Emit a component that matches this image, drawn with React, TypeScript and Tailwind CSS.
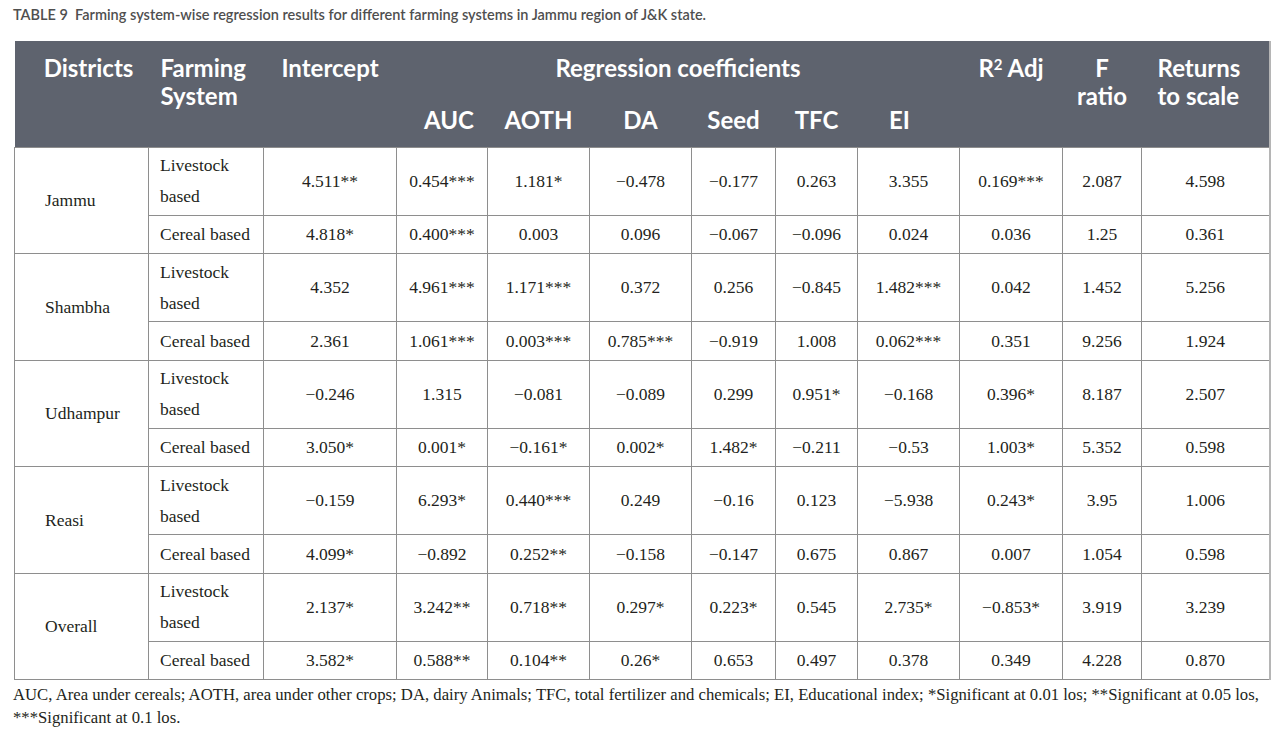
const sans = { fontFamily: 'Lato, "Open Sans", sans-serif' }
const serif = { fontFamily: '"Liberation Serif", "Times New Roman", serif' }

type Group = {
  district: string
  livestock: string[]
  cereal: string[]
}

const groups: Group[] = [
  {
    district: 'Jammu',
    livestock: ['4.511**', '0.454***', '1.181*', '−0.478', '−0.177', '0.263', '3.355', '0.169***', '2.087', '4.598'],
    cereal: ['4.818*', '0.400***', '0.003', '0.096', '−0.067', '−0.096', '0.024', '0.036', '1.25', '0.361'],
  },
  {
    district: 'Shambha',
    livestock: ['4.352', '4.961***', '1.171***', '0.372', '0.256', '−0.845', '1.482***', '0.042', '1.452', '5.256'],
    cereal: ['2.361', '1.061***', '0.003***', '0.785***', '−0.919', '1.008', '0.062***', '0.351', '9.256', '1.924'],
  },
  {
    district: 'Udhampur',
    livestock: ['−0.246', '1.315', '−0.081', '−0.089', '0.299', '0.951*', '−0.168', '0.396*', '8.187', '2.507'],
    cereal: ['3.050*', '0.001*', '−0.161*', '0.002*', '1.482*', '−0.211', '−0.53', '1.003*', '5.352', '0.598'],
  },
  {
    district: 'Reasi',
    livestock: ['−0.159', '6.293*', '0.440***', '0.249', '−0.16', '0.123', '−5.938', '0.243*', '3.95', '1.006'],
    cereal: ['4.099*', '−0.892', '0.252**', '−0.158', '−0.147', '0.675', '0.867', '0.007', '1.054', '0.598'],
  },
  {
    district: 'Overall',
    livestock: ['2.137*', '3.242**', '0.718**', '0.297*', '0.223*', '0.545', '2.735*', '−0.853*', '3.919', '3.239'],
    cereal: ['3.582*', '0.588**', '0.104**', '0.26*', '0.653', '0.497', '0.378', '0.349', '4.228', '0.870'],
  },
]

const colWidths = [134, 115, 133, 91, 102, 102, 84, 82, 102, 103, 79, 128]
const subHeads = ['AUC', 'AOTH', 'DA', 'Seed', 'TFC', 'EI']

const cell = 'border border-[#8e8e8e] text-center align-middle'

export default function App() {
  return (
    <div className="h-[732px] w-[1280px] overflow-hidden bg-white pl-[13px] pt-[6px] text-[#231f20]">
      <p className="text-[14.5px] font-semibold leading-[17px] text-[#4f4f4f]" style={sans}>
        TABLE 9&nbsp; Farming system-wise regression results for different farming systems in Jammu region of J&amp;K state.
      </p>

      <table className="ml-[1px] mt-[18px] w-[1255px] table-fixed border-collapse border-r-2 border-r-[#b5b5b5]">
        <colgroup>
          {colWidths.map((w, i) => (
            <col key={i} style={{ width: w }} />
          ))}
        </colgroup>
        <thead className="bg-[#5e636e] text-[24px] font-bold leading-[28px] text-white" style={sans}>
          <tr className="h-[56px]">
            <th rowSpan={2} className="pl-[14px] pt-[13px] text-center align-top font-bold">Districts</th>
            <th rowSpan={2} className="pl-[12px] pt-[13px] text-left align-top font-bold">
              Farming
              <br />
              System
            </th>
            <th rowSpan={2} className="pt-[13px] text-center align-top font-bold">Intercept</th>
            <th colSpan={6} className="pt-[13px] text-center align-top font-bold">Regression coefficients</th>
            <th rowSpan={2} className="pt-[13px] text-center align-top font-bold">
              R<sup className="text-[15px]">2</sup> Adj
            </th>
            <th rowSpan={2} className="pt-[13px] text-center align-top font-bold">
              F
              <br />
              ratio
            </th>
            <th rowSpan={2} className="pl-[16px] pt-[13px] text-left align-top font-bold">
              Returns
              <br />
              to scale
            </th>
          </tr>
          <tr className="h-[50px]">
            {subHeads.map((h, i) => (
              <th key={h} className={`pb-[3px] text-center align-middle font-bold ${i === 0 ? 'pl-[14px]' : ''} ${i === 5 ? 'pr-[18px]' : ''}`}>
                {h}
              </th>
            ))}
          </tr>
        </thead>
        <tbody className="text-[17.5px]" style={serif}>
          {groups.map((g) => (
            <GroupRows key={g.district} group={g} />
          ))}
        </tbody>
      </table>

      <div className="mt-[3px] text-[16.7px] leading-[23px] whitespace-nowrap" style={serif}>
        <p>
          AUC, Area under cereals; AOTH, area under other crops; DA, dairy Animals; TFC, total fertilizer and chemicals; EI, Educational index; *Significant at 0.01 los; **Significant at 0.05 los,
        </p>
        <p>***Significant at 0.1 los.</p>
      </div>
    </div>
  )
}

function GroupRows({ group }: { group: Group }) {
  return (
    <>
      <tr className="h-[68px]">
        <td rowSpan={2} className="border border-[#8e8e8e] pl-[30px] text-left align-middle">
          {group.district}
        </td>
        <td className="border border-[#8e8e8e] pl-[11px] text-left align-middle leading-[31px]">
          Livestock
          <br />
          based
        </td>
        {group.livestock.map((v, i) => (
          <td key={i} className={cell}>
            {v}
          </td>
        ))}
      </tr>
      <tr className="h-[38.5px]">
        <td className="border border-[#8e8e8e] pl-[11px] text-left align-middle">Cereal based</td>
        {group.cereal.map((v, i) => (
          <td key={i} className={cell}>
            {v}
          </td>
        ))}
      </tr>
    </>
  )
}
